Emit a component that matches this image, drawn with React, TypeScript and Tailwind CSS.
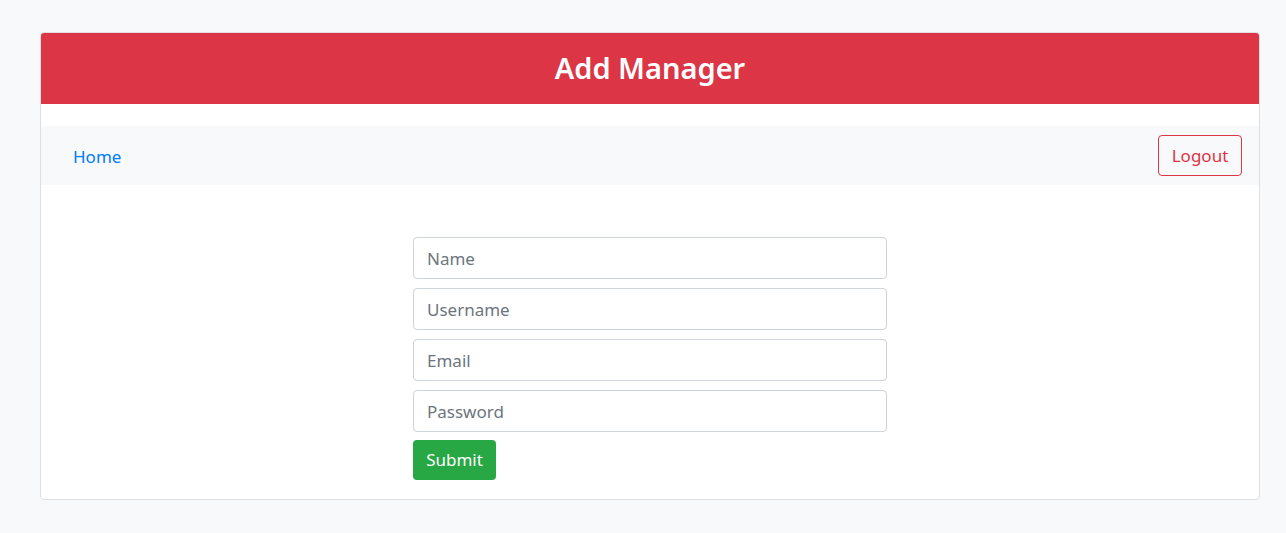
import React from "react";

export default function App() {
  const font = { fontFamily: '"Segoe UI", "Noto Sans", "Open Sans", sans-serif' };
  return (
    <div className="min-h-[533px] w-full bg-[#f8f9fa] pt-[32px] px-[40px]" style={font}>
      <div className="w-[1220px] border border-[#dfdfdf] rounded-[4px] bg-white overflow-hidden">
        <div className="h-[71px] bg-[#dc3545] flex justify-center pt-[15px]">
          <h2 className="text-[29px] leading-[40px] font-semibold text-white">Add Manager</h2>
        </div>
        <div className="mt-[22px] h-[59px] bg-[#f8f9fa] flex items-center justify-between pl-[32px] pr-[17px]">
          <a className="text-[17px] text-[#007bff] cursor-pointer pt-[2px]">Home</a>
          <button className="h-[41px] w-[84px] border border-[#dc3545] rounded-[4px] text-[17px] text-[#dc3545] bg-transparent pt-[1px]">
            Logout
          </button>
        </div>
        <div className="flex justify-center pt-[52px] pb-[19px]">
          <form className="w-[474px] flex flex-col">
            {["Name", "Username", "Email", "Password"].map((p) => (
              <input
                key={p}
                placeholder={p}
                type={p === "Password" ? "password" : "text"}
                className="h-[42px] mb-[9px] w-full border border-[#ced4da] rounded-[4px] px-[13px] pt-[1px] text-[17px] text-[#495057] placeholder:text-[#6c757d] outline-none bg-white"
              />
            ))}
            <button
              type="button"
              className="self-start h-[40px] w-[83px] -mt-[1px] bg-[#28a745] text-white rounded-[4px] text-[17px]"
            >
              Submit
            </button>
          </form>
        </div>
      </div>
    </div>
  );
}
